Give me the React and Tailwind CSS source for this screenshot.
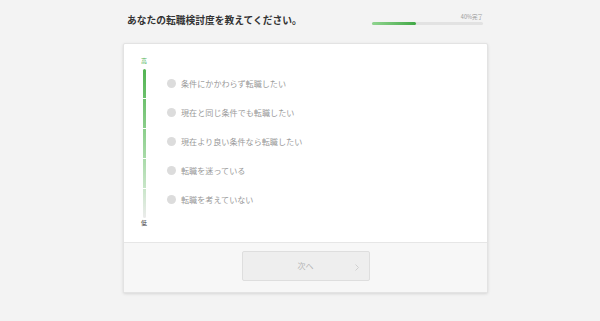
export default function App() {
  const options = [
    "条件にかかわらず転職したい",
    "現在と同じ条件でも転職したい",
    "現在より良い条件なら転職したい",
    "転職を迷っている",
    "転職を考えていない",
  ];
  const segs = [
    "bg-gradient-to-b from-[#52b452] to-[#6cc06c]",
    "bg-gradient-to-b from-[#6ec16e] to-[#8acd8a]",
    "bg-gradient-to-b from-[#8ccf8c] to-[#a8daa8]",
    "bg-gradient-to-b from-[#aadbaa] to-[#c8e5c8]",
    "bg-gradient-to-b from-[#cae6ca] to-[#ececec]",
  ];
  return (
    <div
      className="w-[600px] h-[321px] bg-[#f3f3f3] pl-[123px]"
      style={{ fontFamily: '"Noto Sans CJK JP", "Noto Sans", sans-serif' }}
    >
      <div className="w-[365px]">
        <div className="h-[43px] flex items-start justify-between pt-[13px] pl-[4px] pr-[5px]">
          <div className="text-[9.75px] leading-[14px] font-bold text-[#333]">
            あなたの転職検討度を教えてください。
          </div>
          <div className="w-[111px] flex flex-col pt-[1px]">
            <div className="text-[5.5px] leading-[7px] text-[#999] text-right">40%完了</div>
            <div className="mt-[1px] h-[3px] bg-[#e2e2e2] rounded-full">
              <div className="h-[3px] w-[40%] rounded-full bg-gradient-to-r from-[#8fd48f] to-[#3fa845]" />
            </div>
          </div>
        </div>
        <div className="bg-white border border-[#e3e3e3] rounded-[2px] shadow-[0_1px_3px_rgba(0,0,0,0.12)] overflow-hidden">
          <div className="h-[198px] flex pl-[16px] pt-[13px]">
            <div className="w-[8px] flex flex-col items-center">
              <div className="text-[6px] leading-[8px] text-[#4caf50]">高</div>
              <div className="mt-[4px] w-[3px] flex flex-col gap-[1px]">
                {segs.map((s, i) => (
                  <div
                    key={i}
                    className={`${s} h-[29px] w-[3px] ${i === 0 ? "rounded-t-full" : ""} ${i === 4 ? "rounded-b-full" : ""}`}
                  />
                ))}
              </div>
              <div className="mt-[1px] text-[6px] leading-[8px] text-[#444]">低</div>
            </div>
            <div className="ml-[19px] mt-[12px] flex flex-col">
              {options.map((o) => (
                <div key={o} className="h-[29px] flex items-center">
                  <div className="w-[9px] h-[9px] rounded-full bg-[#dcdcdc]" />
                  <div className="ml-[5px] text-[8.1px] leading-[10px] text-[#999]">{o}</div>
                </div>
              ))}
            </div>
          </div>
          <div className="h-[50px] bg-[#f7f7f7] border-t border-[#e6e6e6] flex justify-center pt-[8px]">
            <div className="relative w-[128px] h-[30px] bg-[#eeeeee] border border-[#dedede] rounded-[2px] flex items-center justify-center">
              <span className="text-[8px] text-[#b5b5b5]">次へ</span>
              <svg className="absolute right-[10px] top-[12px]" width="4" height="7" viewBox="0 0 4 7">
                <path d="M0.5 0.5 L3.5 3.5 L0.5 6.5" fill="none" stroke="#d0d0d0" strokeWidth="1" />
              </svg>
            </div>
          </div>
        </div>
      </div>
    </div>
  );
}
